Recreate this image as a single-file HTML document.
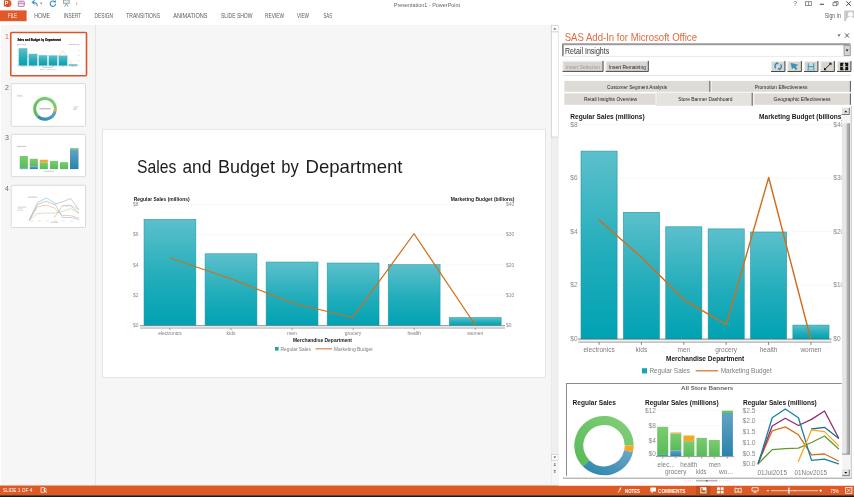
<!DOCTYPE html>
<html lang="en"><head><meta charset="utf-8"><title>Presentation1 - PowerPoint</title>
<style>html,body{margin:0;padding:0;background:#fff;overflow:hidden}svg{display:block;will-change:transform}text{white-space:pre}</style></head>
<body>
<svg width="854" height="497" viewBox="0 0 854 497" font-family='"Liberation Sans", Arial, sans-serif'>
<defs>
<linearGradient id="gt" x1="0" y1="0" x2="0" y2="1"><stop offset="0" stop-color="#5cc0cb"/><stop offset="0.55" stop-color="#22adbb"/><stop offset="1" stop-color="#00a2b3"/></linearGradient>
<linearGradient id="gg" x1="0" y1="0" x2="0" y2="1"><stop offset="0" stop-color="#7ccc72"/><stop offset="1" stop-color="#58bb58"/></linearGradient>
<linearGradient id="gb" x1="0" y1="0" x2="0" y2="1"><stop offset="0" stop-color="#62a3c4"/><stop offset="1" stop-color="#2a83ab"/></linearGradient>
<linearGradient id="dg" x1="1" y1="0" x2="0" y2="1"><stop offset="0" stop-color="#86d07c"/><stop offset="1" stop-color="#55ba55"/></linearGradient>
<linearGradient id="db" x1="1" y1="0" x2="0" y2="1"><stop offset="0" stop-color="#6aa9c8"/><stop offset="1" stop-color="#2a83ab"/></linearGradient>
<clipPath id="cpane"><rect x="560" y="106" width="281.700" height="369.800"/></clipPath>
</defs>
<rect x="0" y="0" width="854" height="497" fill="#ffffff" />
<rect x="1" y="25" width="557.5" height="461" fill="#f6f6f6" />
<line x1="95.5" y1="25" x2="95.5" y2="486" stroke="#e4e4e4" stroke-width="0.9" />
<rect x="0" y="485.5" width="854" height="10" fill="#dd5a25" />
<rect x="0" y="495.3" width="854" height="1.7" fill="#1a1a1a" />
<path d="M6.500 0h2.800a3.200 3.600 0 0 1 0 6.900H6.500z" fill="#e0602f"/>
<rect x="3.9" y="0.3" width="4.8" height="6.2" fill="#d24a22" rx="0.8"/>
<text x="4.7" y="5.4" font-size="5.4" fill="#ffffff" font-weight="bold" >P</text>
<rect x="18.3" y="1.2" width="5.9" height="5.1" fill="none" stroke="#ad5fa6" stroke-width="0.9" rx="0.6"/>
<line x1="18.3" y1="3.7" x2="24.2" y2="3.7" stroke="#ad5fa6" stroke-width="0.8" />
<rect x="19.8" y="1.2" width="2.8" height="1.3" fill="#c58fc0" />
<path d="M37.3 6.300c.2-2.800-1.600-4-4.300-4M34.700 .300l-2.500 2 2.500 2.100" fill="none" stroke="#4a8fd0" stroke-width="1.050"/>
<path d="M40 2.800h2.400l-1.200 1.400z" fill="#666"/>
<path d="M54.700 1.700a2.700 2.700 0 1 0 .9 2.100" fill="none" stroke="#3b86bd" stroke-width="1.050"/><path d="M55.800 0v2.500h-2.500z" fill="#3b86bd"/>
<rect x="63.6" y="0" width="5.6" height="3.3" fill="#e9e9e9" stroke="#8a8a8a" stroke-width="0.7" />
<path d="M64.600 6.800l1.800-3 1.800 3" fill="none" stroke="#4aa3bd" stroke-width="0.850"/>
<rect x="76.4" y="2.3" width="0.8" height="2.8" fill="#a5a5a5" />
<text x="393.75" y="6.56" font-size="6" fill="#666" textLength="66.3" lengthAdjust="spacingAndGlyphs" >Presentation1 - PowerPoint</text>
<text x="793.3" y="6.1" font-size="6.6" fill="#5a5a5a" >?</text>
<rect x="805.6" y="1.7" width="6" height="3.8" fill="none" stroke="#777" stroke-width="0.8" />
<line x1="808.6" y1="1.7" x2="808.6" y2="5.5" stroke="#777" stroke-width="0.8" />
<line x1="819.8" y1="4.3" x2="824" y2="4.3" stroke="#555" stroke-width="1.1" />
<rect x="833" y="2.7" width="3.8" height="3" fill="none" stroke="#6a6a6a" stroke-width="0.75" />
<path d="M834.3 2.700v-1.200h3.800v3h-1.300" fill="none" stroke="#6a6a6a" stroke-width="0.750"/>
<path d="M846.4 1.300l4.400 4.600M850.800 1.300l-4.400 4.600" stroke="#3c3c3c" stroke-width="0.950"/>
<text x="824.8" y="18" font-size="6.4" fill="#606060" textLength="16" lengthAdjust="spacingAndGlyphs" >Sign in</text>
<rect x="844.2" y="10.5" width="9.8" height="10.5" fill="#c9c9c9" />
<circle cx="850.5" cy="14.3" r="2.5" fill="#fff"/><path d="M846 21c.4-3 2.2-4.2 4.5-4.2s4 1.2 4.5 4.2z" fill="#fff"/>
<rect x="0" y="10.4" width="26.6" height="10.8" fill="#e0592b" />
<text x="8.1" y="18.28" font-size="6.6" fill="#ffffff" textLength="8.9" lengthAdjust="spacingAndGlyphs" >FILE</text>
<text x="34.25" y="18.28" font-size="6.6" fill="#5a5a5a" textLength="15.75" lengthAdjust="spacingAndGlyphs" >HOME</text>
<text x="63.75" y="18.28" font-size="6.6" fill="#5a5a5a" textLength="17.5" lengthAdjust="spacingAndGlyphs" >INSERT</text>
<text x="94.5" y="18.28" font-size="6.6" fill="#5a5a5a" textLength="18.5" lengthAdjust="spacingAndGlyphs" >DESIGN</text>
<text x="126.25" y="18.28" font-size="6.6" fill="#5a5a5a" textLength="33.75" lengthAdjust="spacingAndGlyphs" >TRANSITIONS</text>
<text x="173.25" y="18.28" font-size="6.6" fill="#5a5a5a" textLength="34.25" lengthAdjust="spacingAndGlyphs" >ANIMATIONS</text>
<text x="221" y="18.28" font-size="6.6" fill="#5a5a5a" textLength="31.5" lengthAdjust="spacingAndGlyphs" >SLIDE SHOW</text>
<text x="265" y="18.28" font-size="6.6" fill="#5a5a5a" textLength="19" lengthAdjust="spacingAndGlyphs" >REVIEW</text>
<text x="297" y="18.28" font-size="6.6" fill="#5a5a5a" textLength="12" lengthAdjust="spacingAndGlyphs" >VIEW</text>
<text x="323.5" y="18.28" font-size="6.6" fill="#5a5a5a" textLength="8.5" lengthAdjust="spacingAndGlyphs" >SAS</text>
<text x="5" y="38.6" font-size="7" fill="#e0703f" >1</text>
<text x="5" y="89.5" font-size="7" fill="#6a6a6a" >2</text>
<text x="5" y="140" font-size="7" fill="#6a6a6a" >3</text>
<text x="5" y="190.6" font-size="7" fill="#6a6a6a" >4</text>
<rect x="10.75" y="32.5" width="75.75" height="43.2" fill="#ffffff" stroke="#d8552b" stroke-width="1.6" rx="1"/>
<g transform="translate(11.97,33.56) scale(0.1637) translate(-102.5,-129.3)">
<text y="175.5" font-size="18.4" fill="#000" font-weight="bold" stroke="#000" stroke-width="1.2"><tspan x="137" textLength="39.25" lengthAdjust="spacingAndGlyphs">Sales</tspan> <tspan x="182.5" textLength="28.75" lengthAdjust="spacingAndGlyphs">and</tspan> <tspan x="218" textLength="57" lengthAdjust="spacingAndGlyphs">Budget</tspan> <tspan x="281.25" textLength="17.5" lengthAdjust="spacingAndGlyphs">by</tspan> <tspan x="305.5" textLength="97" lengthAdjust="spacingAndGlyphs">Department</tspan></text>
<line x1="140" y1="294.95" x2="505" y2="294.95" stroke="#e4e4e4" stroke-width="0.5" stroke-dasharray="0.8 0.8"/>
<line x1="140" y1="264.8" x2="505" y2="264.8" stroke="#e4e4e4" stroke-width="0.5" stroke-dasharray="0.8 0.8"/>
<line x1="140" y1="234.65" x2="505" y2="234.65" stroke="#e4e4e4" stroke-width="0.5" stroke-dasharray="0.8 0.8"/>
<line x1="140" y1="204.5" x2="505" y2="204.5" stroke="#e4e4e4" stroke-width="0.5" stroke-dasharray="0.8 0.8"/>
<text x="133" y="326.88" font-size="4.95" fill="#b0b0b0" >$0</text>
<text x="506" y="326.88" font-size="4.95" fill="#b0b0b0" >$0</text>
<text x="133" y="296.73" font-size="4.95" fill="#b0b0b0" >$2</text>
<text x="506" y="296.73" font-size="4.95" fill="#b0b0b0" >$10</text>
<text x="133" y="266.58" font-size="4.95" fill="#b0b0b0" >$4</text>
<text x="506" y="266.58" font-size="4.95" fill="#b0b0b0" >$20</text>
<text x="133" y="236.43" font-size="4.95" fill="#b0b0b0" >$6</text>
<text x="506" y="236.43" font-size="4.95" fill="#b0b0b0" >$30</text>
<text x="133" y="206.28" font-size="4.95" fill="#b0b0b0" >$8</text>
<text x="506" y="206.28" font-size="4.95" fill="#b0b0b0" >$40</text>
<rect x="144" y="219.25" width="51.9" height="106.25" fill="url(#gt)" stroke="#1c98a6" stroke-width="0.5" />
<rect x="205.05" y="253.75" width="51.9" height="71.75" fill="url(#gt)" stroke="#1c98a6" stroke-width="0.5" />
<rect x="266.1" y="262" width="51.9" height="63.5" fill="url(#gt)" stroke="#1c98a6" stroke-width="0.5" />
<rect x="327.15" y="263" width="51.9" height="62.5" fill="url(#gt)" stroke="#1c98a6" stroke-width="0.5" />
<rect x="388.2" y="264.5" width="51.9" height="61" fill="url(#gt)" stroke="#1c98a6" stroke-width="0.5" />
<rect x="449.25" y="317.5" width="51.9" height="8" fill="url(#gt)" stroke="#1c98a6" stroke-width="0.5" />
<rect x="140" y="325.7" width="365" height="2.7" fill="#e6e6e6" />
<line x1="140" y1="325.5" x2="505" y2="325.5" stroke="#4d6d73" stroke-width="0.6" />
<line x1="140" y1="328.1" x2="505" y2="328.1" stroke="#b2b2b2" stroke-width="0.9" />
<line x1="169.95" y1="328.1" x2="169.95" y2="330.1" stroke="#777" stroke-width="0.63" />
<text x="169.95" y="335.18" font-size="4.95" fill="#b0b0b0" text-anchor="middle" >electronics</text>
<line x1="231" y1="328.1" x2="231" y2="330.1" stroke="#777" stroke-width="0.63" />
<text x="231" y="335.18" font-size="4.95" fill="#b0b0b0" text-anchor="middle" >kids</text>
<line x1="292.05" y1="328.1" x2="292.05" y2="330.1" stroke="#777" stroke-width="0.63" />
<text x="292.05" y="335.18" font-size="4.95" fill="#b0b0b0" text-anchor="middle" >men</text>
<line x1="353.1" y1="328.1" x2="353.1" y2="330.1" stroke="#777" stroke-width="0.63" />
<text x="353.1" y="335.18" font-size="4.95" fill="#b0b0b0" text-anchor="middle" >grocery</text>
<line x1="414.15" y1="328.1" x2="414.15" y2="330.1" stroke="#777" stroke-width="0.63" />
<text x="414.15" y="335.18" font-size="4.95" fill="#b0b0b0" text-anchor="middle" >health</text>
<line x1="475.2" y1="328.1" x2="475.2" y2="330.1" stroke="#777" stroke-width="0.63" />
<text x="475.2" y="335.18" font-size="4.95" fill="#b0b0b0" text-anchor="middle" >women</text>
<polyline points="170,258 231,278.75 292,303 352.75,317.5 414,233.75 475.25,325" fill="none" stroke="#cf6f1c" stroke-width="2.2" stroke-linejoin="round" stroke-linecap="round" opacity="0.55"/>
<text x="133.75" y="201.18" font-size="4.95" fill="#9a9a9a" font-weight="bold" textLength="55.8" lengthAdjust="spacingAndGlyphs" >Regular Sales (millions)</text>
<text x="450.75" y="201.18" font-size="4.95" fill="#9a9a9a" font-weight="bold" textLength="63.75" lengthAdjust="spacingAndGlyphs" >Marketing Budget (billions)</text>
<text x="322.5" y="341.88" font-size="4.95" fill="#9a9a9a" font-weight="bold" text-anchor="middle" textLength="59" lengthAdjust="spacingAndGlyphs" >Merchandise Department</text>
<rect x="275" y="347" width="3.6" height="3.6" fill="#1ba3b2" />
<text x="280.5" y="350.58" font-size="4.95" fill="#b0b0b0" textLength="30.5" lengthAdjust="spacingAndGlyphs" >Regular Sales</text>
<line x1="315.5" y1="348.8" x2="332" y2="348.8" stroke="#e08a50" stroke-width="2.2" />
<text x="334" y="350.58" font-size="4.95" fill="#b0b0b0" textLength="38.7" lengthAdjust="spacingAndGlyphs" >Marketing Budget</text>
</g>
<rect x="11.2" y="83.6" width="74.3" height="42.8" fill="#ffffff" stroke="#d2d2d2" stroke-width="0.8" rx="1"/>
<line x1="16.9" y1="95.9" x2="22.5" y2="95.9" stroke="#b0b0b0" stroke-width="0.7" />
<path d="M36.59 117.16A11.9 11.9 0 1 1 56.9 108.75L53.8 108.75A8.8 8.8 0 1 0 38.78 114.97Z" fill="url(#dg)"/>
<path d="M56.9 108.75A11.9 11.9 0 0 1 56.6 111.43L53.57 110.73A8.8 8.8 0 0 0 53.8 108.75Z" fill="#f6a728"/>
<path d="M56.6 111.43A11.9 11.9 0 0 1 36.59 117.16L38.78 114.97A8.8 8.8 0 0 0 53.57 110.73Z" fill="url(#db)"/>
<line x1="39.4" y1="108.8" x2="50.6" y2="108.8" stroke="#9a9a9a" stroke-width="0.9" />
<line x1="73.5" y1="107" x2="78.5" y2="107" stroke="#b5b5b5" stroke-width="0.6" />
<line x1="73.5" y1="108.3" x2="77" y2="108.3" stroke="#b5b5b5" stroke-width="0.6" />
<line x1="73.5" y1="109.6" x2="76" y2="109.6" stroke="#b5b5b5" stroke-width="0.6" />
<rect x="11.2" y="134.4" width="74.3" height="42.2" fill="#ffffff" stroke="#d2d2d2" stroke-width="0.8" rx="1"/>
<line x1="16.9" y1="146.5" x2="26.2" y2="146.5" stroke="#b0b0b0" stroke-width="0.7" />
<rect x="19.75" y="155.9" width="8.1" height="12.4" fill="url(#gg)" />
<rect x="19.75" y="168.3" width="8.1" height="0.8" fill="url(#gb)" />
<rect x="29.75" y="158.75" width="8.1" height="7.5" fill="url(#gg)" />
<rect x="29.75" y="166.25" width="8.1" height="2.85" fill="url(#gb)" />
<rect x="39.75" y="159.75" width="8.1" height="2.5" fill="#f6a728" />
<rect x="39.75" y="162.25" width="8.1" height="6.85" fill="url(#gg)" />
<rect x="50" y="160.9" width="8.1" height="8.2" fill="url(#gg)" />
<rect x="60" y="162.1" width="8.1" height="7" fill="url(#gg)" />
<rect x="70" y="148.1" width="8.5" height="1.65" fill="url(#gg)" />
<rect x="70" y="149.75" width="8.5" height="19.35" fill="url(#gb)" />
<line x1="43.75" y1="171.3" x2="53.75" y2="171.3" stroke="#aaa" stroke-width="0.6" />
<rect x="11.2" y="185.3" width="74.3" height="42.2" fill="#ffffff" stroke="#d2d2d2" stroke-width="0.8" rx="1"/>
<line x1="27.75" y1="197.1" x2="36.9" y2="197.1" stroke="#b0b0b0" stroke-width="0.7" />
<line x1="17.5" y1="207.2" x2="26.2" y2="207.2" stroke="#b5b5b5" stroke-width="0.6" />
<line x1="17.5" y1="208.8" x2="23" y2="208.8" stroke="#e8c0a8" stroke-width="0.6" />
<line x1="17.5" y1="210.4" x2="23" y2="210.4" stroke="#b5d8b0" stroke-width="0.6" />
<polyline points="29.4,220 37.5,213.5 46.25,213.1 54.4,213.1 62.5,211.25 70.6,208.5 78.75,213.1" fill="none" stroke="#a9d6a2" stroke-width="0.6" stroke-linejoin="round" stroke-linecap="round" />
<polyline points="29.4,220 37.5,206.9 46.25,205 54.4,208.1 62.5,215.6 70.6,215.6 78.75,218.1" fill="none" stroke="#f0a27c" stroke-width="0.6" stroke-linejoin="round" stroke-linecap="round" />
<polyline points="29.4,220 37.5,204.4 46.25,201.25 54.4,204.4 62.5,201.9 70.6,198.5 78.75,209.4" fill="none" stroke="#a8a8a8" stroke-width="0.6" stroke-linejoin="round" stroke-linecap="round" />
<polyline points="29.4,220 37.5,202.5 46.25,198.1 54.4,202.5 62.5,217.5 70.6,217.5 78.75,219.4" fill="none" stroke="#7cc3d9" stroke-width="0.6" stroke-linejoin="round" stroke-linecap="round" />
<polyline points="54.4,217.5 62.5,205.6 70.6,206 78.75,212.5" fill="none" stroke="#f3a06e" stroke-width="0.6" stroke-linejoin="round" stroke-linecap="round" />
<polyline points="62.5,205.6 70.6,205 78.75,209.4" fill="none" stroke="#9ccfe0" stroke-width="0.6" stroke-linejoin="round" stroke-linecap="round" />
<line x1="30" y1="221" x2="78" y2="221" stroke="#c8c8c8" stroke-width="0.5" stroke-dasharray="3 5"/>
<line x1="50.6" y1="222.2" x2="58" y2="222.2" stroke="#aaa" stroke-width="0.6" />
<rect x="102.5" y="129.3" width="443.1" height="248.2" fill="#ffffff" stroke="#dedede" stroke-width="0.8" />
<text y="172.5" font-size="18.4" fill="#1c1c1c"><tspan x="137" textLength="39.25" lengthAdjust="spacingAndGlyphs">Sales</tspan> <tspan x="182.5" textLength="28.75" lengthAdjust="spacingAndGlyphs">and</tspan> <tspan x="218" textLength="57" lengthAdjust="spacingAndGlyphs">Budget</tspan> <tspan x="281.25" textLength="17.5" lengthAdjust="spacingAndGlyphs">by</tspan> <tspan x="305.5" textLength="97" lengthAdjust="spacingAndGlyphs">Department</tspan></text>
<line x1="140" y1="294.95" x2="505" y2="294.95" stroke="#e4e4e4" stroke-width="0.5" stroke-dasharray="0.8 0.8"/>
<line x1="140" y1="264.8" x2="505" y2="264.8" stroke="#e4e4e4" stroke-width="0.5" stroke-dasharray="0.8 0.8"/>
<line x1="140" y1="234.65" x2="505" y2="234.65" stroke="#e4e4e4" stroke-width="0.5" stroke-dasharray="0.8 0.8"/>
<line x1="140" y1="204.5" x2="505" y2="204.5" stroke="#e4e4e4" stroke-width="0.5" stroke-dasharray="0.8 0.8"/>
<text x="133" y="326.88" font-size="4.95" fill="#8a8a8a" >$0</text>
<text x="506" y="326.88" font-size="4.95" fill="#8a8a8a" >$0</text>
<text x="133" y="296.73" font-size="4.95" fill="#8a8a8a" >$2</text>
<text x="506" y="296.73" font-size="4.95" fill="#8a8a8a" >$10</text>
<text x="133" y="266.58" font-size="4.95" fill="#8a8a8a" >$4</text>
<text x="506" y="266.58" font-size="4.95" fill="#8a8a8a" >$20</text>
<text x="133" y="236.43" font-size="4.95" fill="#8a8a8a" >$6</text>
<text x="506" y="236.43" font-size="4.95" fill="#8a8a8a" >$30</text>
<text x="133" y="206.28" font-size="4.95" fill="#8a8a8a" >$8</text>
<text x="506" y="206.28" font-size="4.95" fill="#8a8a8a" >$40</text>
<rect x="144" y="219.25" width="51.9" height="106.25" fill="url(#gt)" stroke="#1c98a6" stroke-width="0.5" />
<rect x="205.05" y="253.75" width="51.9" height="71.75" fill="url(#gt)" stroke="#1c98a6" stroke-width="0.5" />
<rect x="266.1" y="262" width="51.9" height="63.5" fill="url(#gt)" stroke="#1c98a6" stroke-width="0.5" />
<rect x="327.15" y="263" width="51.9" height="62.5" fill="url(#gt)" stroke="#1c98a6" stroke-width="0.5" />
<rect x="388.2" y="264.5" width="51.9" height="61" fill="url(#gt)" stroke="#1c98a6" stroke-width="0.5" />
<rect x="449.25" y="317.5" width="51.9" height="8" fill="url(#gt)" stroke="#1c98a6" stroke-width="0.5" />
<rect x="140" y="325.7" width="365" height="2.7" fill="#e6e6e6" />
<line x1="140" y1="325.5" x2="505" y2="325.5" stroke="#4d6d73" stroke-width="0.6" />
<line x1="140" y1="328.1" x2="505" y2="328.1" stroke="#b2b2b2" stroke-width="0.9" />
<line x1="169.95" y1="328.1" x2="169.95" y2="330.1" stroke="#777" stroke-width="0.63" />
<text x="169.95" y="335.18" font-size="4.95" fill="#7d7d7d" text-anchor="middle" >electronics</text>
<line x1="231" y1="328.1" x2="231" y2="330.1" stroke="#777" stroke-width="0.63" />
<text x="231" y="335.18" font-size="4.95" fill="#7d7d7d" text-anchor="middle" >kids</text>
<line x1="292.05" y1="328.1" x2="292.05" y2="330.1" stroke="#777" stroke-width="0.63" />
<text x="292.05" y="335.18" font-size="4.95" fill="#7d7d7d" text-anchor="middle" >men</text>
<line x1="353.1" y1="328.1" x2="353.1" y2="330.1" stroke="#777" stroke-width="0.63" />
<text x="353.1" y="335.18" font-size="4.95" fill="#7d7d7d" text-anchor="middle" >grocery</text>
<line x1="414.15" y1="328.1" x2="414.15" y2="330.1" stroke="#777" stroke-width="0.63" />
<text x="414.15" y="335.18" font-size="4.95" fill="#7d7d7d" text-anchor="middle" >health</text>
<line x1="475.2" y1="328.1" x2="475.2" y2="330.1" stroke="#777" stroke-width="0.63" />
<text x="475.2" y="335.18" font-size="4.95" fill="#7d7d7d" text-anchor="middle" >women</text>
<polyline points="170,258 231,278.75 292,303 352.75,317.5 414,233.75 475.25,325" fill="none" stroke="#cf6f1c" stroke-width="1.25" stroke-linejoin="round" stroke-linecap="round" opacity="1"/>
<text x="133.75" y="201.18" font-size="4.95" fill="#1a1a1a" font-weight="bold" textLength="55.8" lengthAdjust="spacingAndGlyphs" >Regular Sales (millions)</text>
<text x="450.75" y="201.18" font-size="4.95" fill="#1a1a1a" font-weight="bold" textLength="63.75" lengthAdjust="spacingAndGlyphs" >Marketing Budget (billions)</text>
<text x="322.5" y="341.88" font-size="4.95" fill="#1a1a1a" font-weight="bold" text-anchor="middle" textLength="59" lengthAdjust="spacingAndGlyphs" >Merchandise Department</text>
<rect x="275" y="347" width="3.6" height="3.6" fill="#1ba3b2" />
<text x="280.5" y="350.58" font-size="4.95" fill="#7d7d7d" textLength="30.5" lengthAdjust="spacingAndGlyphs" >Regular Sales</text>
<line x1="315.5" y1="348.8" x2="332" y2="348.8" stroke="#e08a50" stroke-width="1.25" />
<text x="334" y="350.58" font-size="4.95" fill="#7d7d7d" textLength="38.7" lengthAdjust="spacingAndGlyphs" >Marketing Budget</text>
<rect x="551" y="25" width="7.5" height="429.4" fill="#efefef" />
<line x1="551.3" y1="25" x2="551.3" y2="485.5" stroke="#e3e3e3" stroke-width="0.6" />
<line x1="558.3" y1="25" x2="558.3" y2="485.5" stroke="#e3e3e3" stroke-width="0.6" />
<rect x="551.3" y="25.3" width="7" height="6.7" fill="#ffffff" stroke="#c9c9c9" stroke-width="0.7" />
<path d="M553.3 29.6l1.5-1.9 1.5 1.9z" fill="#555"/>
<rect x="551.3" y="32" width="7" height="105" fill="#ffffff" stroke="#c9c9c9" stroke-width="0.7" />
<rect x="551.6" y="454.4" width="6.5" height="5.8" fill="#ffffff" stroke="#c9c9c9" stroke-width="0.7" />
<path d="M553.4 456.5l1.4 1.8 1.4-1.8z" fill="#555"/>
<path d="M553.6 464.3l1.2-1.4 1.2 1.4zM553.6 466l1.2-1.4 1.2 1.4z" fill="#666"/>
<path d="M553.6 470l1.2 1.4 1.2-1.4zM553.6 471.7l1.2 1.4 1.2-1.4z" fill="#666"/>
<rect x="558.6" y="25" width="295.4" height="460.5" fill="#ffffff" />
<text x="564.7" y="40.7" font-size="10.2" fill="#e2693f" textLength="132.3" lengthAdjust="spacingAndGlyphs" >SAS Add-In for Microsoft Office</text>
<path d="M837.3 34.6h3.4l-1.7 2z" fill="#555"/>
<path d="M845 33.4l4 4.2M849 33.4l-4 4.2" stroke="#444" stroke-width="0.9"/>
<rect x="562.5" y="43.8" width="288.2" height="12.6" fill="#ffffff" />
<path d="M562.5 56.4V43.8H850.7" fill="none" stroke="#858585" stroke-width="0.9"/>
<path d="M563.4 55.6V44.7H850" fill="none" stroke="#505050" stroke-width="0.6"/>
<path d="M562.5 56.4H850.7V43.8" fill="none" stroke="#e2e2e2" stroke-width="0.8"/>
<text x="565" y="53.7" font-size="8.2" fill="#333" textLength="44.2" lengthAdjust="spacingAndGlyphs" >Retail Insights</text>
<rect x="844" y="45.2" width="6.2" height="10.4" fill="#d6d3ce" stroke="#777" stroke-width="0.6" />
<path d="M845.7 49.6h2.8l-1.4 1.8z" fill="#111"/>
<rect x="562.6" y="60.9" width="40.8" height="10.8" fill="#d9d6d1" />
<path d="M563 71.7V61.3H603.4" fill="none" stroke="#f7f7f7" stroke-width="0.8"/>
<path d="M562.6 71.4H603V60.9" fill="none" stroke="#4a4a4a" stroke-width="1"/>
<text x="566" y="68.66" font-size="6" fill="#9a9a9a" textLength="34" lengthAdjust="spacingAndGlyphs" >Insert Selection</text>
<rect x="605.7" y="60.9" width="43" height="10.8" fill="#d9d6d1" />
<path d="M606.1 71.7V61.3H648.7" fill="none" stroke="#f7f7f7" stroke-width="0.8"/>
<path d="M605.7 71.4H648.3V60.9" fill="none" stroke="#4a4a4a" stroke-width="1"/>
<text x="608.9" y="68.66" font-size="6" fill="#1a1a1a" textLength="37" lengthAdjust="spacingAndGlyphs" >Insert Remaining</text>
<rect x="771" y="61" width="14.3" height="10.8" fill="#d9d6d1" />
<path d="M771.4 71.8V61.4H785.3" fill="none" stroke="#f7f7f7" stroke-width="0.8"/>
<path d="M771 71.5H784.9V61" fill="none" stroke="#4a4a4a" stroke-width="1"/>
<rect x="787.5" y="61" width="14.3" height="10.8" fill="#d9d6d1" />
<path d="M787.9 71.8V61.4H801.8" fill="none" stroke="#f7f7f7" stroke-width="0.8"/>
<path d="M787.5 71.5H801.4V61" fill="none" stroke="#4a4a4a" stroke-width="1"/>
<rect x="804" y="61" width="14.3" height="10.8" fill="#d9d6d1" />
<path d="M804.4 71.8V61.4H818.3" fill="none" stroke="#f7f7f7" stroke-width="0.8"/>
<path d="M804 71.5H817.9V61" fill="none" stroke="#4a4a4a" stroke-width="1"/>
<rect x="820.5" y="61" width="14.3" height="10.8" fill="#d9d6d1" />
<path d="M820.9 71.8V61.4H834.8" fill="none" stroke="#f7f7f7" stroke-width="0.8"/>
<path d="M820.5 71.5H834.4V61" fill="none" stroke="#4a4a4a" stroke-width="1"/>
<rect x="837" y="61" width="14.3" height="10.8" fill="#d9d6d1" />
<path d="M837.4 71.8V61.4H851.3" fill="none" stroke="#f7f7f7" stroke-width="0.8"/>
<path d="M837 71.5H850.9V61" fill="none" stroke="#4a4a4a" stroke-width="1"/>
<path d="M775.8 68.2a3 3 0 0 1 1.5-5M780.6 64.4a3 3 0 0 1-1.5 5" fill="none" stroke="#1d87b8" stroke-width="1.3"/><path d="M776.6 62l2.2 1.3-2 1.5zM779.8 70.4l-2.2-1.3 2-1.5z" fill="#1d87b8"/>
<path d="M791 63.3l6.8 1.6-2.4 1.2 1.6 2.8-1.4.8-1.6-2.8-1.8 1.8z" fill="#2c9bc0" stroke="#176f93" stroke-width="0.4"/>
<path d="M808.3 63.2v6.6M813.7 63.2v6.6M808.3 66.6h5.4" fill="none" stroke="#3aa6c8" stroke-width="1.2"/><path d="M807 70h8" stroke="#3aa6c8" stroke-width="0.6"/>
<path d="M824.6 69.6l6.2-6.2" stroke="#111" stroke-width="0.9"/><path d="M831.4 62.8v2.6l-2.6-2.6zM824 70.2v-2.6l2.600 2.6z" fill="#111"/>
<path d="M840.2 62.700h3.300v1.300l-1 .9 1 1-1 1-1-1-1.300 1zM848.200 62.700h-3.300v1.300l1 .9-1 1 1 1 1-1 1.300 1zM840.200 70.200h3.300v-1.300l-1-.9 1-1-1-1-1 1-1.300-1zM848.200 70.200h-3.300v-1.300l1-.9-1-1 1-1 1 1 1.300-1z" fill="#111"/>
<line x1="562.5" y1="75.6" x2="851" y2="75.6" stroke="#dcdcdc" stroke-width="0.8" />
<rect x="564" y="80.9" width="146.3" height="10.9" fill="#dedbd6" />
<line x1="709.9" y1="80.9" x2="709.9" y2="91.8" stroke="#4a4a4a" stroke-width="0.9" />
<line x1="564.3" y1="80.9" x2="564.3" y2="91.8" stroke="#f6f6f6" stroke-width="0.6" />
<text x="607.1" y="88.64" font-size="5.8" fill="#1e1e1e" textLength="60.1" lengthAdjust="spacingAndGlyphs" >Customer Segment Analysis</text>
<rect x="711.2" y="80.9" width="139.6" height="10.9" fill="#dedbd6" />
<line x1="850.4" y1="80.9" x2="850.4" y2="91.8" stroke="#4a4a4a" stroke-width="0.9" />
<line x1="711.5" y1="80.9" x2="711.5" y2="91.8" stroke="#f6f6f6" stroke-width="0.6" />
<text x="754.7" y="88.64" font-size="5.8" fill="#1e1e1e" textLength="52.8" lengthAdjust="spacingAndGlyphs" >Promotion Effectiveness</text>
<rect x="564" y="93.4" width="91.8" height="11.4" fill="#dedbd6" />
<line x1="564.3" y1="93.4" x2="564.3" y2="104.8" stroke="#f6f6f6" stroke-width="0.6" />
<text x="584" y="101.39" font-size="5.8" fill="#1e1e1e" textLength="53" lengthAdjust="spacingAndGlyphs" >Retail Insights Overview</text>
<rect x="753.6" y="93.4" width="97.2" height="11.4" fill="#dedbd6" />
<line x1="850.4" y1="93.4" x2="850.4" y2="104.8" stroke="#4a4a4a" stroke-width="0.9" />
<line x1="753.9" y1="93.4" x2="753.9" y2="104.8" stroke="#f6f6f6" stroke-width="0.6" />
<text x="773.6" y="101.39" font-size="5.8" fill="#1e1e1e" textLength="56.9" lengthAdjust="spacingAndGlyphs" >Geographic Effectiveness</text>
<rect x="655.8" y="92.6" width="96.8" height="13.2" fill="#e5e3df" />
<line x1="752.2" y1="92.6" x2="752.2" y2="105.8" stroke="#4a4a4a" stroke-width="0.9" />
<line x1="656.1" y1="92.6" x2="656.1" y2="105.8" stroke="#f6f6f6" stroke-width="0.6" />
<text x="678.2" y="101.49" font-size="5.8" fill="#1e1e1e" textLength="54.3" lengthAdjust="spacingAndGlyphs" >Store Banner Dashboard</text>
<g clip-path="url(#cpane)">
<line x1="578.3" y1="285.05" x2="831.5" y2="285.05" stroke="#e4e4e4" stroke-width="0.6" stroke-dasharray="1 1"/>
<line x1="578.3" y1="231.5" x2="831.5" y2="231.5" stroke="#e4e4e4" stroke-width="0.6" stroke-dasharray="1 1"/>
<line x1="578.3" y1="177.95" x2="831.5" y2="177.95" stroke="#e4e4e4" stroke-width="0.6" stroke-dasharray="1 1"/>
<line x1="578.3" y1="124.4" x2="831.5" y2="124.4" stroke="#e4e4e4" stroke-width="0.6" stroke-dasharray="1 1"/>
<text x="570.3" y="340.96" font-size="6.55" fill="#8a8a8a" >$0</text>
<text x="833.3" y="340.96" font-size="6.55" fill="#8a8a8a" >$0</text>
<text x="570.3" y="287.41" font-size="6.55" fill="#8a8a8a" >$2</text>
<text x="833.3" y="287.41" font-size="6.55" fill="#8a8a8a" >$10</text>
<text x="570.3" y="233.86" font-size="6.55" fill="#8a8a8a" >$4</text>
<text x="833.3" y="233.86" font-size="6.55" fill="#8a8a8a" >$20</text>
<text x="570.3" y="180.31" font-size="6.55" fill="#8a8a8a" >$6</text>
<text x="833.3" y="180.31" font-size="6.55" fill="#8a8a8a" >$30</text>
<text x="570.3" y="126.76" font-size="6.55" fill="#8a8a8a" >$8</text>
<text x="833.3" y="126.76" font-size="6.55" fill="#8a8a8a" >$40</text>
<rect x="581" y="151.1" width="36.1" height="187.9" fill="url(#gt)" stroke="#1c98a6" stroke-width="0.6" />
<rect x="623.38" y="212.3" width="36.1" height="126.7" fill="url(#gt)" stroke="#1c98a6" stroke-width="0.6" />
<rect x="665.76" y="226.8" width="36.1" height="112.2" fill="url(#gt)" stroke="#1c98a6" stroke-width="0.6" />
<rect x="708.14" y="228.9" width="36.1" height="110.1" fill="url(#gt)" stroke="#1c98a6" stroke-width="0.6" />
<rect x="750.52" y="232" width="36.1" height="107" fill="url(#gt)" stroke="#1c98a6" stroke-width="0.6" />
<rect x="792.9" y="325.1" width="36.1" height="13.9" fill="url(#gt)" stroke="#1c98a6" stroke-width="0.6" />
<rect x="578.3" y="339.5" width="253.2" height="2.6" fill="#f2f2f2" />
<line x1="578.3" y1="339.1" x2="831.5" y2="339.1" stroke="#4d6d73" stroke-width="0.8" />
<line x1="578.3" y1="342.1" x2="831.5" y2="342.1" stroke="#b2b2b2" stroke-width="1.3" />
<line x1="599.05" y1="342.1" x2="599.05" y2="344.9" stroke="#777" stroke-width="0.91" />
<text x="599.05" y="352.26" font-size="6.55" fill="#7d7d7d" text-anchor="middle" >electronics</text>
<line x1="641.43" y1="342.1" x2="641.43" y2="344.9" stroke="#777" stroke-width="0.91" />
<text x="641.43" y="352.26" font-size="6.55" fill="#7d7d7d" text-anchor="middle" >kids</text>
<line x1="683.81" y1="342.1" x2="683.81" y2="344.9" stroke="#777" stroke-width="0.91" />
<text x="683.81" y="352.26" font-size="6.55" fill="#7d7d7d" text-anchor="middle" >men</text>
<line x1="726.19" y1="342.1" x2="726.19" y2="344.9" stroke="#777" stroke-width="0.91" />
<text x="726.19" y="352.26" font-size="6.55" fill="#7d7d7d" text-anchor="middle" >grocery</text>
<line x1="768.57" y1="342.1" x2="768.57" y2="344.9" stroke="#777" stroke-width="0.91" />
<text x="768.57" y="352.26" font-size="6.55" fill="#7d7d7d" text-anchor="middle" >health</text>
<line x1="810.95" y1="342.1" x2="810.95" y2="344.9" stroke="#777" stroke-width="0.91" />
<text x="810.95" y="352.26" font-size="6.55" fill="#7d7d7d" text-anchor="middle" >women</text>
<polyline points="598.8,219.8 641.5,257.2 684.3,300.1 726.3,324.6 768.7,177.5 810.6,338.5" fill="none" stroke="#cf6f1c" stroke-width="1.45" stroke-linejoin="round" stroke-linecap="round" opacity="1"/>
<text x="570.3" y="119.46" font-size="6.55" fill="#1a1a1a" font-weight="bold" textLength="74.4" lengthAdjust="spacingAndGlyphs" >Regular Sales (millions)</text>
<text x="759.1" y="119.46" font-size="6.55" fill="#1a1a1a" font-weight="bold" textLength="84.4" lengthAdjust="spacingAndGlyphs" >Marketing Budget (billions)</text>
<text x="705.1" y="361.06" font-size="6.55" fill="#1a1a1a" font-weight="bold" text-anchor="middle" textLength="78.3" lengthAdjust="spacingAndGlyphs" >Merchandise Department</text>
<rect x="641.9" y="368.2" width="5.2" height="5.2" fill="#1ba3b2" />
<text x="649.4" y="373.16" font-size="6.55" fill="#7d7d7d" textLength="40.6" lengthAdjust="spacingAndGlyphs" >Regular Sales</text>
<line x1="695.6" y1="370.8" x2="718.1" y2="370.8" stroke="#e08a50" stroke-width="1.45" />
<text x="720.7" y="373.16" font-size="6.55" fill="#7d7d7d" textLength="51.1" lengthAdjust="spacingAndGlyphs" >Marketing Budget</text>
<rect x="566.5" y="383.5" width="290" height="100" fill="#ffffff" stroke="#8c8c8c" stroke-width="1" />
<text x="707.2" y="390.23" font-size="6.2" fill="#666" font-weight="bold" text-anchor="middle" textLength="52.2" lengthAdjust="spacingAndGlyphs" >All Store Banners</text>
<text x="572.6" y="405.16" font-size="6.55" fill="#1a1a1a" font-weight="bold" textLength="43.3" lengthAdjust="spacingAndGlyphs" >Regular Sales</text>
<text x="645" y="405.16" font-size="6.55" fill="#1a1a1a" font-weight="bold" textLength="73.6" lengthAdjust="spacingAndGlyphs" >Regular Sales (millions)</text>
<text x="743" y="405.16" font-size="6.55" fill="#1a1a1a" font-weight="bold" textLength="73.7" lengthAdjust="spacingAndGlyphs" >Regular Sales (millions)</text>
<path d="M583 466.6A29.7 29.7 0 1 1 633.7 445.6L624.7 445.6A20.7 20.7 0 1 0 589.36 460.24Z" fill="url(#dg)"/>
<path d="M633.7 445.6A29.7 29.7 0 0 1 632.94 452.28L624.17 450.26A20.7 20.7 0 0 0 624.7 445.6Z" fill="#f6a728"/>
<path d="M632.94 452.28A29.7 29.7 0 0 1 583 466.6L589.36 460.24A20.7 20.7 0 0 0 624.17 450.26Z" fill="url(#db)"/>
<text x="645" y="412.56" font-size="6.55" fill="#8a8a8a" >$12</text>
<text x="648.5" y="427.56" font-size="6.55" fill="#8a8a8a" >$8</text>
<text x="648.5" y="443.16" font-size="6.55" fill="#8a8a8a" >$4</text>
<text x="648.5" y="455.56" font-size="6.55" fill="#8a8a8a" >$0</text>
<line x1="657" y1="410.2" x2="734" y2="410.2" stroke="#e6e6e6" stroke-width="0.6" stroke-dasharray="1 1"/>
<line x1="657" y1="425.7" x2="734" y2="425.7" stroke="#e6e6e6" stroke-width="0.6" stroke-dasharray="1 1"/>
<line x1="657" y1="441.2" x2="734" y2="441.2" stroke="#e6e6e6" stroke-width="0.6" stroke-dasharray="1 1"/>
<rect x="657.2" y="426.8" width="11" height="28.1" fill="url(#gg)" />
<rect x="657.2" y="454.9" width="11" height="1.3" fill="url(#gb)" />
<rect x="670.3" y="432.5" width="11" height="1.1" fill="#f6a728" />
<rect x="670.3" y="433.6" width="11" height="16.7" fill="url(#gg)" />
<rect x="670.3" y="450.3" width="11" height="5.9" fill="url(#gb)" />
<rect x="683.4" y="435.5" width="11" height="5.7" fill="#f6a728" />
<rect x="683.4" y="441.2" width="11" height="15" fill="url(#gg)" />
<rect x="696.5" y="437.8" width="10.4" height="18.4" fill="url(#gg)" />
<rect x="708.8" y="440" width="11" height="16.2" fill="url(#gg)" />
<rect x="721.9" y="410.7" width="11" height="2.3" fill="#62c462" />
<rect x="721.9" y="413" width="11" height="43.2" fill="url(#gb)" />
<line x1="656" y1="456.6" x2="734" y2="456.6" stroke="#9a9a9a" stroke-width="1" />
<line x1="662.7" y1="456.6" x2="662.7" y2="458.6" stroke="#8a8a8a" stroke-width="0.8" />
<line x1="675.8" y1="456.6" x2="675.8" y2="458.6" stroke="#8a8a8a" stroke-width="0.8" />
<line x1="688.9" y1="456.6" x2="688.9" y2="458.6" stroke="#8a8a8a" stroke-width="0.8" />
<line x1="701.7" y1="456.6" x2="701.7" y2="458.6" stroke="#8a8a8a" stroke-width="0.8" />
<line x1="714.3" y1="456.6" x2="714.3" y2="458.6" stroke="#8a8a8a" stroke-width="0.8" />
<line x1="727.4" y1="456.6" x2="727.4" y2="458.6" stroke="#8a8a8a" stroke-width="0.8" />
<text x="657.6" y="467.26" font-size="6.55" fill="#7d7d7d" textLength="17.1" lengthAdjust="spacingAndGlyphs" >elec...</text>
<text x="680.3" y="467.26" font-size="6.55" fill="#7d7d7d" textLength="16.8" lengthAdjust="spacingAndGlyphs" >health</text>
<text x="708.8" y="467.26" font-size="6.55" fill="#7d7d7d" textLength="11.9" lengthAdjust="spacingAndGlyphs" >men</text>
<text x="665" y="474.26" font-size="6.55" fill="#7d7d7d" textLength="21.5" lengthAdjust="spacingAndGlyphs" >grocery</text>
<text x="696.1" y="474.26" font-size="6.55" fill="#7d7d7d" textLength="10.4" lengthAdjust="spacingAndGlyphs" >kids</text>
<text x="719" y="474.26" font-size="6.55" fill="#7d7d7d" textLength="14" lengthAdjust="spacingAndGlyphs" >wo...</text>
<text x="742.5" y="466.26" font-size="6.55" fill="#8a8a8a" textLength="13.1" lengthAdjust="spacingAndGlyphs" >$0.0</text>
<line x1="758" y1="463.9" x2="842" y2="463.9" stroke="#efefef" stroke-width="0.6" stroke-dasharray="1 1"/>
<text x="742.5" y="455.56" font-size="6.55" fill="#8a8a8a" textLength="13.1" lengthAdjust="spacingAndGlyphs" >$0.5</text>
<line x1="758" y1="453.2" x2="842" y2="453.2" stroke="#efefef" stroke-width="0.6" stroke-dasharray="1 1"/>
<text x="742.5" y="444.86" font-size="6.55" fill="#8a8a8a" textLength="13.1" lengthAdjust="spacingAndGlyphs" >$1.0</text>
<line x1="758" y1="442.5" x2="842" y2="442.5" stroke="#efefef" stroke-width="0.6" stroke-dasharray="1 1"/>
<text x="742.5" y="434.16" font-size="6.55" fill="#8a8a8a" textLength="13.1" lengthAdjust="spacingAndGlyphs" >$1.5</text>
<line x1="758" y1="431.8" x2="842" y2="431.8" stroke="#efefef" stroke-width="0.6" stroke-dasharray="1 1"/>
<text x="742.5" y="423.46" font-size="6.55" fill="#8a8a8a" textLength="13.1" lengthAdjust="spacingAndGlyphs" >$2.0</text>
<line x1="758" y1="421.1" x2="842" y2="421.1" stroke="#efefef" stroke-width="0.6" stroke-dasharray="1 1"/>
<text x="742.5" y="412.76" font-size="6.55" fill="#8a8a8a" textLength="13.1" lengthAdjust="spacingAndGlyphs" >$2.5</text>
<line x1="758" y1="410.4" x2="842" y2="410.4" stroke="#efefef" stroke-width="0.6" stroke-dasharray="1 1"/>
<polyline points="758.2,463.9 772.2,449.6 785.3,448.6 798.4,448.2 811.5,442.5 824.5,436 838.5,448.8" fill="none" stroke="#5f992e" stroke-width="1.3" stroke-linejoin="round" stroke-linecap="round" />
<polyline points="758.2,463 772.2,430.8 785.3,426.9 798.4,434.8 811.5,454.9 824.5,454 838.5,461" fill="none" stroke="#d4701e" stroke-width="1.3" stroke-linejoin="round" stroke-linecap="round" />
<polyline points="758.2,463 772.2,426 785.3,418.2 798.4,425.5 811.5,419.4 824.5,411 838.5,437.8" fill="none" stroke="#8c2d6e" stroke-width="1.3" stroke-linejoin="round" stroke-linecap="round" />
<polyline points="758.2,463.9 772.2,417.7 785.3,409 798.4,417.7 811.5,460.4 824.5,459.2 838.5,463.9" fill="none" stroke="#17809d" stroke-width="1.3" stroke-linejoin="round" stroke-linecap="round" />
<polyline points="811.5,429 824.5,427.3 838.5,438.3" fill="none" stroke="#1d6e93" stroke-width="1.3" stroke-linejoin="round" stroke-linecap="round" />
<polyline points="798.4,461.3 811.5,429.9 824.5,431.6 838.5,445.6" fill="none" stroke="#f7a823" stroke-width="1.3" stroke-linejoin="round" stroke-linecap="round" />
<text x="757.4" y="474.76" font-size="6.55" fill="#7d7d7d" textLength="29.6" lengthAdjust="spacingAndGlyphs" >01Jul2015</text>
<text x="794.4" y="474.76" font-size="6.55" fill="#7d7d7d" textLength="32.8" lengthAdjust="spacingAndGlyphs" >01Nov2015</text>
</g>
<rect x="842.1" y="107.5" width="7.6" height="369.5" fill="#f4f4f4" />
<rect x="842.1" y="123.4" width="7.6" height="331" fill="#e6e6e6" />
<rect x="846.6" y="123.4" width="3.2" height="331" fill="#b2b2b2" />
<rect x="848.7" y="123.4" width="1.1" height="331" fill="#919191" />
<line x1="842.1" y1="454.1" x2="849.7" y2="454.1" stroke="#8a8a8a" stroke-width="0.9" />
<rect x="842.1" y="107.9" width="7.6" height="7" fill="#e4e2de" />
<path d="M842.1 114.5H849.3V107.9" fill="none" stroke="#6a6a6a" stroke-width="0.9"/>
<path d="M844.3 112.3l1.500-1.900 1.500 1.900z" fill="#111"/>
<rect x="842.1" y="469.6" width="7.6" height="6.5" fill="#e4e2de" />
<path d="M842.1 475.7H849.3V469.6" fill="none" stroke="#6a6a6a" stroke-width="0.9"/>
<path d="M844.3 471.95l1.500 1.900 1.500-1.900z" fill="#111"/>
<line x1="563" y1="478.2" x2="851.6" y2="478.2" stroke="#9c9c9c" stroke-width="1" />
<line x1="851.2" y1="106" x2="851.2" y2="478.5" stroke="#b4b4b4" stroke-width="0.9" />
<line x1="684" y1="480.8" x2="694" y2="480.8" stroke="#c8c8c8" stroke-width="0.6" stroke-dasharray="1 1"/>
<line x1="719" y1="480.8" x2="730" y2="480.8" stroke="#c8c8c8" stroke-width="0.6" stroke-dasharray="1 1"/>
<line x1="696" y1="480.7" x2="717.5" y2="480.7" stroke="#b9b9b9" stroke-width="1.6" />
<path d="M705.5 481.3l1.3-1.400 1.3 1.400z" fill="#333"/>
<text x="2.8" y="492.46" font-size="4.9" fill="#ffffff" textLength="29.6" lengthAdjust="spacingAndGlyphs" >SLIDE 1 OF 4</text>
<rect x="41" y="487.7" width="3.5" height="4.5" fill="none" stroke="#ffffff" stroke-width="0.7" />
<path d="M44 490.5l3 2.2" stroke="#fff" stroke-width="0.8"/><circle cx="45" cy="489.6" r="1.3" fill="none" stroke="#fff" stroke-width="0.6"/>
<path d="M617.5 493l1.300-2.500 1.200.6zM619 490l1.500-2.800.9.5-1.300 2.800z" fill="#fff"/>
<text x="625" y="492.53" font-size="4.8" fill="#ffffff" font-weight="bold" textLength="15" lengthAdjust="spacingAndGlyphs" >NOTES</text>
<path d="M650.300 487.600h5.600v4h-2.600l-1.600 1.800v-1.800h-1.400z" fill="#fff"/>
<text x="658" y="492.53" font-size="4.8" fill="#ffffff" font-weight="bold" textLength="27.5" lengthAdjust="spacingAndGlyphs" >COMMENTS</text>
<rect x="696" y="485.9" width="14.5" height="9.3" fill="#c34d1d" />
<rect x="700.8" y="487.7" width="5.2" height="5.2" fill="none" stroke="#ffffff" stroke-width="0.9" />
<rect x="702.5" y="487.7" width="3.5" height="2.6" fill="#ffffff" />
<rect x="717" y="487.3" width="2.9" height="2.6" fill="#ffffff" />
<rect x="717" y="490.8" width="2.9" height="2.6" fill="#ffffff" />
<rect x="720.7" y="487.3" width="2.9" height="2.6" fill="#ffffff" />
<rect x="720.7" y="490.8" width="2.9" height="2.6" fill="#ffffff" />
<path d="M735 488v4.500l3.100-.8 3.100.8V488l-3.100.8z" fill="none" stroke="#fff" stroke-width="0.8"/><path d="M738.100 488.800v3.700" stroke="#fff" stroke-width="0.7"/>
<path d="M752 487.700h6.200v3.300H752z" fill="none" stroke="#fff" stroke-width="0.8"/><path d="M755.100 491v1.800M753.600 493.200l1.500-1.300 1.500 1.300" fill="none" stroke="#fff" stroke-width="0.700"/>
<line x1="766.8" y1="490.7" x2="769" y2="490.7" stroke="#ffffff" stroke-width="0.9" />
<line x1="771" y1="490.7" x2="818" y2="490.7" stroke="#ffffff" stroke-width="0.7" />
<rect x="788.3" y="487.5" width="1.2" height="6.2" fill="#ffffff" />
<line x1="794.8" y1="489.8" x2="794.8" y2="491.6" stroke="#ffffff" stroke-width="0.5" />
<line x1="819.4" y1="490.7" x2="822" y2="490.7" stroke="#ffffff" stroke-width="0.9" />
<line x1="820.7" y1="489.4" x2="820.7" y2="492" stroke="#ffffff" stroke-width="0.9" />
<text x="830.5" y="492.53" font-size="4.8" fill="#ffffff" textLength="8.3" lengthAdjust="spacingAndGlyphs" >75%</text>
<rect x="845.7" y="487.5" width="6.2" height="5.8" fill="none" stroke="#ffffff" stroke-width="0.8" />
<path d="M847 488.800l3.600 3.200M850.600 488.800l-3.600 3.200" stroke="#fff" stroke-width="0.7"/>
</svg>
</body></html>
